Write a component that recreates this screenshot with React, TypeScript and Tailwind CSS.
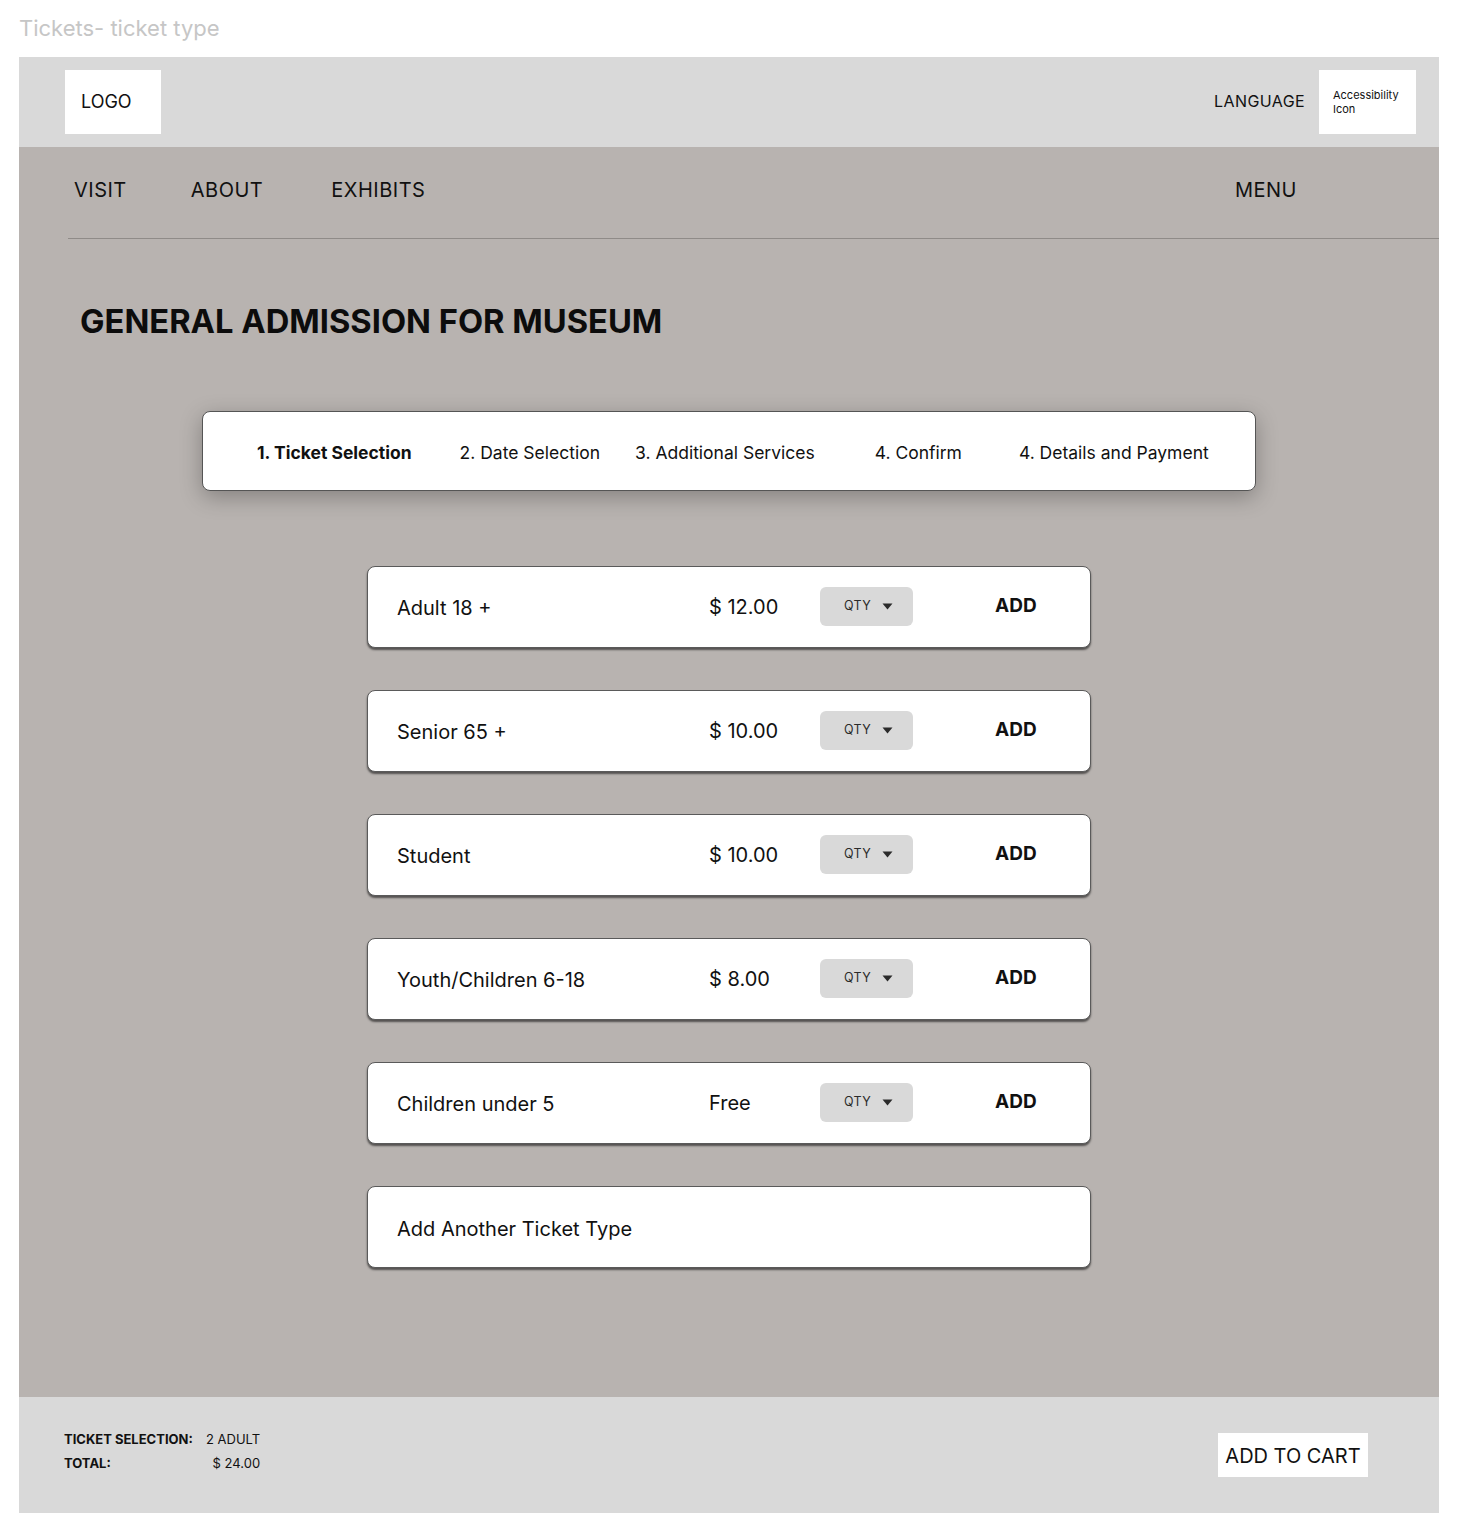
import React from 'react';

const tickets = [
  { name: 'Adult 18 +', price: '$ 12.00' },
  { name: 'Senior 65 +', price: '$ 10.00' },
  { name: 'Student', price: '$ 10.00' },
  { name: 'Youth/Children 6-18', price: '$ 8.00' },
  { name: 'Children under 5', price: 'Free' },
];

const steps = [
  { label: '1. Ticket Selection', cls: 'ml-[54px] font-bold' },
  { label: '2. Date Selection', cls: 'ml-[48px]' },
  { label: '3. Additional Services', cls: 'ml-[35px]' },
  { label: '4. Confirm', cls: 'ml-[60px]' },
  { label: '4. Details and Payment', cls: 'ml-[57px]' },
];

const Caret = () => (
  <svg width="11" height="7" viewBox="0 0 11 7" className="ml-[11px]">
    <path d="M0.5 0.5 L10.5 0.5 L5.5 6.5 Z" fill="#2b2b2b" />
  </svg>
);

const TicketRow: React.FC<{ name: string; price: string }> = ({ name, price }) => (
  <div className="flex h-[82px] w-[724px] items-center rounded-lg border border-[#5a5a5a] bg-white pl-[29px] shadow-[0_2px_2px_rgba(0,0,0,0.55)]">
    <div className="w-[312px] pt-[3px] text-[20px] text-[#111]">{name}</div>
    <div className="w-[111px] text-[20px] text-[#111]">{price}</div>
    <div className="flex h-[39px] w-[93px] items-center justify-center rounded-md bg-[#d9d9d9] pl-[4px]">
      <span className="text-[12.5px] tracking-wide text-[#2b2b2b]">QTY</span>
      <Caret />
    </div>
    <div className="ml-[82px] text-[19px] font-bold text-[#111]">ADD</div>
  </div>
);

export default function App() {
  return (
    <div className="min-h-[1534px] bg-white font-['Inter',sans-serif] text-[#111]">
      <div className="flex h-[57px] items-center pl-[19px] text-[22px] text-[#c6c6c6]">
        Tickets- ticket type
      </div>

      <div className="ml-[19px] w-[1420px]">
        {/* Top bar */}
        <header className="flex h-[90px] items-center bg-[#d9d9d9] pl-[46px] pr-[23px]">
          <div className="flex h-[64px] w-[96px] items-center bg-white pb-[2px] pl-[16px] text-[18px]">LOGO</div>
          <div className="ml-auto flex items-center">
            <span className="pb-[2px] text-[16px] tracking-wide">LANGUAGE</span>
            <div className="ml-[14px] flex h-[64px] w-[97px] items-center bg-white pl-[14px] text-[11px] leading-[14px]">
              <span>
                Accessibility
                <br />
                Icon
              </span>
            </div>
          </div>
        </header>

        <main className="bg-[#b8b3b0]">
          {/* Nav */}
          <nav className="flex h-[91px] items-center pb-[6px] pl-[55px] pr-[142px] text-[20px] tracking-wide">
            <span>VISIT</span>
            <span className="ml-[64px]">ABOUT</span>
            <span className="ml-[68px]">EXHIBITS</span>
            <span className="ml-auto">MENU</span>
          </nav>
          <div className="ml-[49px] h-px bg-[#8f8b88]" />

          <h1 className="ml-[61px] mt-[66px] text-[32.7px] font-bold leading-none text-[#0c0c0c]">
            GENERAL ADMISSION FOR MUSEUM
          </h1>

          {/* Stepper */}
          <div className="ml-[183px] mt-[73px] flex h-[80px] w-[1054px] items-center rounded-lg border border-[#555] bg-white pt-[5px] text-[17.5px] shadow-[0_6px_22px_rgba(0,0,0,0.28)]">
            {steps.map((s) => (
              <span key={s.label} className={s.cls}>
                {s.label}
              </span>
            ))}
          </div>

          {/* Ticket list */}
          <div className="ml-[348px] mt-[75px] flex flex-col gap-[42px] pb-[129px]">
            {tickets.map((t) => (
              <TicketRow key={t.name} name={t.name} price={t.price} />
            ))}
            <div className="flex h-[82px] w-[724px] items-center rounded-lg border border-[#5a5a5a] bg-white pl-[29px] pt-[4px] text-[20px] shadow-[0_2px_2px_rgba(0,0,0,0.55)]">
              Add Another Ticket Type
            </div>
          </div>
        </main>

        {/* Footer */}
        <footer className="flex h-[116px] items-center bg-[#d9d9d9] pl-[45px] pr-[71px]">
          <div className="-mt-[8px] grid grid-cols-[142px_auto] gap-y-[8px] whitespace-nowrap text-[13px] leading-[16px]">
            <span className="font-bold">TICKET SELECTION:</span>
            <span className="text-right">2 ADULT</span>
            <span className="font-bold">TOTAL:</span>
            <span className="text-right">$ 24.00</span>
          </div>
          <button className="ml-auto flex h-[44px] w-[150px] items-center justify-center bg-white pt-[3px] text-[20px]">
            ADD TO CART
          </button>
        </footer>
      </div>
    </div>
  );
}
